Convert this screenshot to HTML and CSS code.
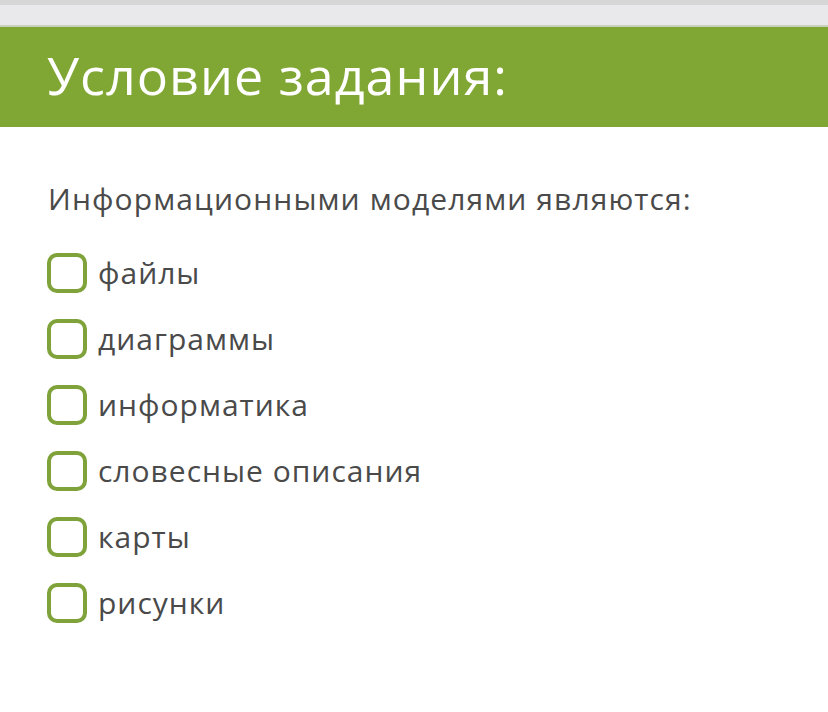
FILE: index.html
```html
<!DOCTYPE html>
<html lang="ru">
<head>
<meta charset="utf-8">
<link rel="stylesheet" href="styles.css">
</head>
<body>
<div class="topbar"></div>
<div class="subbar"></div>
<header class="header"><h1 class="title">Условие задания:</h1></header>
<main class="content">
  <p class="question">Информационными моделями являются:</p>
  <ul class="options">
    <li class="option"><span class="box"></span><span class="label">файлы</span></li>
    <li class="option"><span class="box"></span><span class="label">диаграммы</span></li>
    <li class="option"><span class="box"></span><span class="label">информатика</span></li>
    <li class="option"><span class="box"></span><span class="label">словесные описания</span></li>
    <li class="option"><span class="box"></span><span class="label">карты</span></li>
    <li class="option"><span class="box"></span><span class="label">рисунки</span></li>
  </ul>
</main>
</body>
</html>
```
FILE: styles.css
```css
html, body { margin: 0; padding: 0; background: #fff; }
body { font-family: "Open Sans", "Noto Sans", sans-serif; width: 828px; height: 712px; overflow: hidden; }
.topbar { height: 5px; background: #d6d6d6; }
.subbar { height: 20px; background: #e9e9eb; border-bottom: 2px solid #c9d1bb; }
.header { background: #80a634; height: 100px; display: flex; align-items: center; padding-left: 47px; }
.title { margin: 0; color: #fff; font-weight: 400; font-size: 52px; letter-spacing: 1px; line-height: 1; position: relative; top: -2px; }
.content { padding: 54px 0 0 48px; }
.question { margin: 0 0 36px 0; color: #4a4a4a; font-size: 30px; letter-spacing: 1.1px; line-height: 36px; }
.options { list-style: none; margin: 0; padding: 0; display: flex; flex-direction: column; gap: 26px; }
.option { display: flex; align-items: center; height: 40px; }
.box { width: 32px; height: 32px; border: 4px solid #7fa33a; border-radius: 10px; margin-left: -1px; margin-right: 11px; flex: none; }
.label { color: #4a4a4a; font-size: 30px; letter-spacing: 1px; line-height: 40px; }
```
